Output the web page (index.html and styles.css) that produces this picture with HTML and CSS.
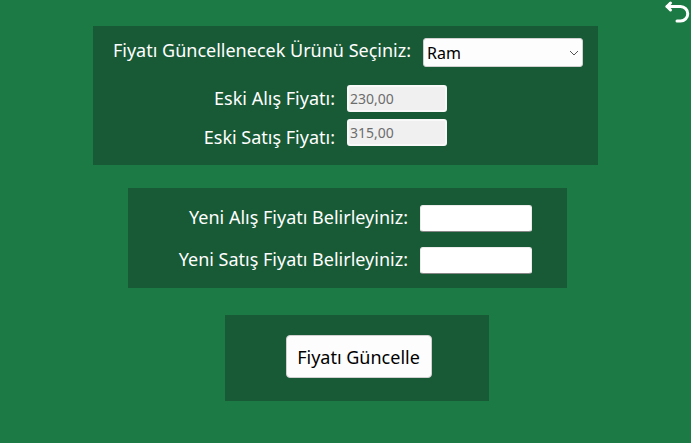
FILE: index.html
```html
<!DOCTYPE html>
<html lang="tr">
<head>
<meta charset="utf-8">
<meta name="viewport" content="width=device-width, initial-scale=1">
<title>Fiyat Güncelle</title>
<link rel="stylesheet" href="styles.css">
</head>
<body>
<button class="back" type="button" aria-label="Geri">
  <svg width="26" height="24" viewBox="0 0 26 24" fill="none" stroke="#fff" stroke-width="3" stroke-linecap="round" stroke-linejoin="round" aria-hidden="true">
    <path d="M3 6.500H16.500A7 7 0 0 1 16.500 21H13"/>
    <path d="M6.500 3L3 6.500L6.500 10"/>
  </svg>
</button>
<form class="form">
  <section class="panel current">
    <div class="row">
      <label for="product">Fiyatı Güncellenecek Ürünü Seçiniz:</label>
      <div class="picker">
        <select id="product"><option>Ram</option></select>
        <svg class="chevron" width="10" height="6" viewBox="0 0 10 6" fill="none" stroke="#555" aria-hidden="true"><path d="M1 1L5 5L9 1"/></svg>
      </div>
    </div>
    <div class="old">
      <div class="labels">
        <label for="old-buy">Eski Alış Fiyatı:</label>
        <label for="old-sell">Eski Satış Fiyatı:</label>
      </div>
      <div class="fields">
        <input id="old-buy" type="text" value="230,00" disabled>
        <input id="old-sell" type="text" value="315,00" disabled>
      </div>
    </div>
  </section>
  <section class="panel fresh">
    <div class="row">
      <label for="new-buy">Yeni Alış Fiyatı Belirleyiniz:</label>
      <input id="new-buy" type="text">
    </div>
    <div class="row">
      <label for="new-sell">Yeni Satış Fiyatı Belirleyiniz:</label>
      <input id="new-sell" type="text">
    </div>
  </section>
  <section class="panel action">
    <button class="submit" type="button">Fiyatı Güncelle</button>
  </section>
</form>
</body>
</html>
```
FILE: styles.css
```css
* {
  box-sizing: border-box;
}

body {
  margin: 0;
  background: #1c7a44;
  color: #fff;
  font: 18px/24px "Noto Sans", "Segoe UI", sans-serif;
}

.back {
  position: absolute;
  top: 0;
  right: 1px;
  padding: 0;
  border: 0;
  background: none;
}

.back svg {
  display: block;
}

.form {
  display: flex;
  flex-direction: column;
  max-width: 505px;
  margin: 0 auto;
  padding: 26px 0;
}

.panel {
  background: #185a36;
}

.row {
  display: flex;
  align-items: flex-start;
  justify-content: flex-end;
  gap: 12px;
}

label {
  white-space: nowrap;
}

input,
select,
.submit {
  font-family: inherit;
  border-radius: 3px;
}

input {
  display: block;
  width: 112px;
  height: 27px;
  padding: 0 2px;
  border: 1px solid #ececec;
  border-bottom-color: #868686;
  background: #fff;
  font-size: 14px;
}

.current {
  padding: 12px 15px 16px;
}

.picker {
  position: relative;
  width: 160px;
}

select {
  display: block;
  width: 100%;
  height: 29px;
  padding: 0 20px 0 3px;
  border: 1px solid #d0d0d0;
  appearance: none;
  background: #fdfdfd;
  color: #000;
  font-size: 16px;
}

.chevron {
  position: absolute;
  top: 12px;
  right: 4px;
}

.old {
  display: flex;
  justify-content: flex-end;
  gap: 12px;
  margin-top: 18px;
  padding-right: 136px;
}

.labels {
  display: flex;
  flex-direction: column;
  gap: 15px;
  padding-top: 1px;
  text-align: right;
}

.fields {
  display: flex;
  flex-direction: column;
  gap: 7px;
}

.fields input {
  width: 100px;
  border: 2px solid #f9f9f9;
  background: #f0f0f0;
  color: #6d6d6d;
  padding: 0 1px;
}

.fresh {
  display: flex;
  flex-direction: column;
  gap: 15px;
  margin: 23px 31px 0 35px;
  padding: 17px 35px 14px;
}

.action {
  display: flex;
  justify-content: center;
  margin: 27px 109px 0 132px;
  padding: 20px 0 23px;
}

.submit {
  width: 146px;
  height: 43px;
  padding: 0;
  margin-left: 3px;
  border: 1px solid #d0d0d0;
  border-radius: 4px;
  background: #fdfdfd;
  color: #000;
  font-size: 18px;
}
```
